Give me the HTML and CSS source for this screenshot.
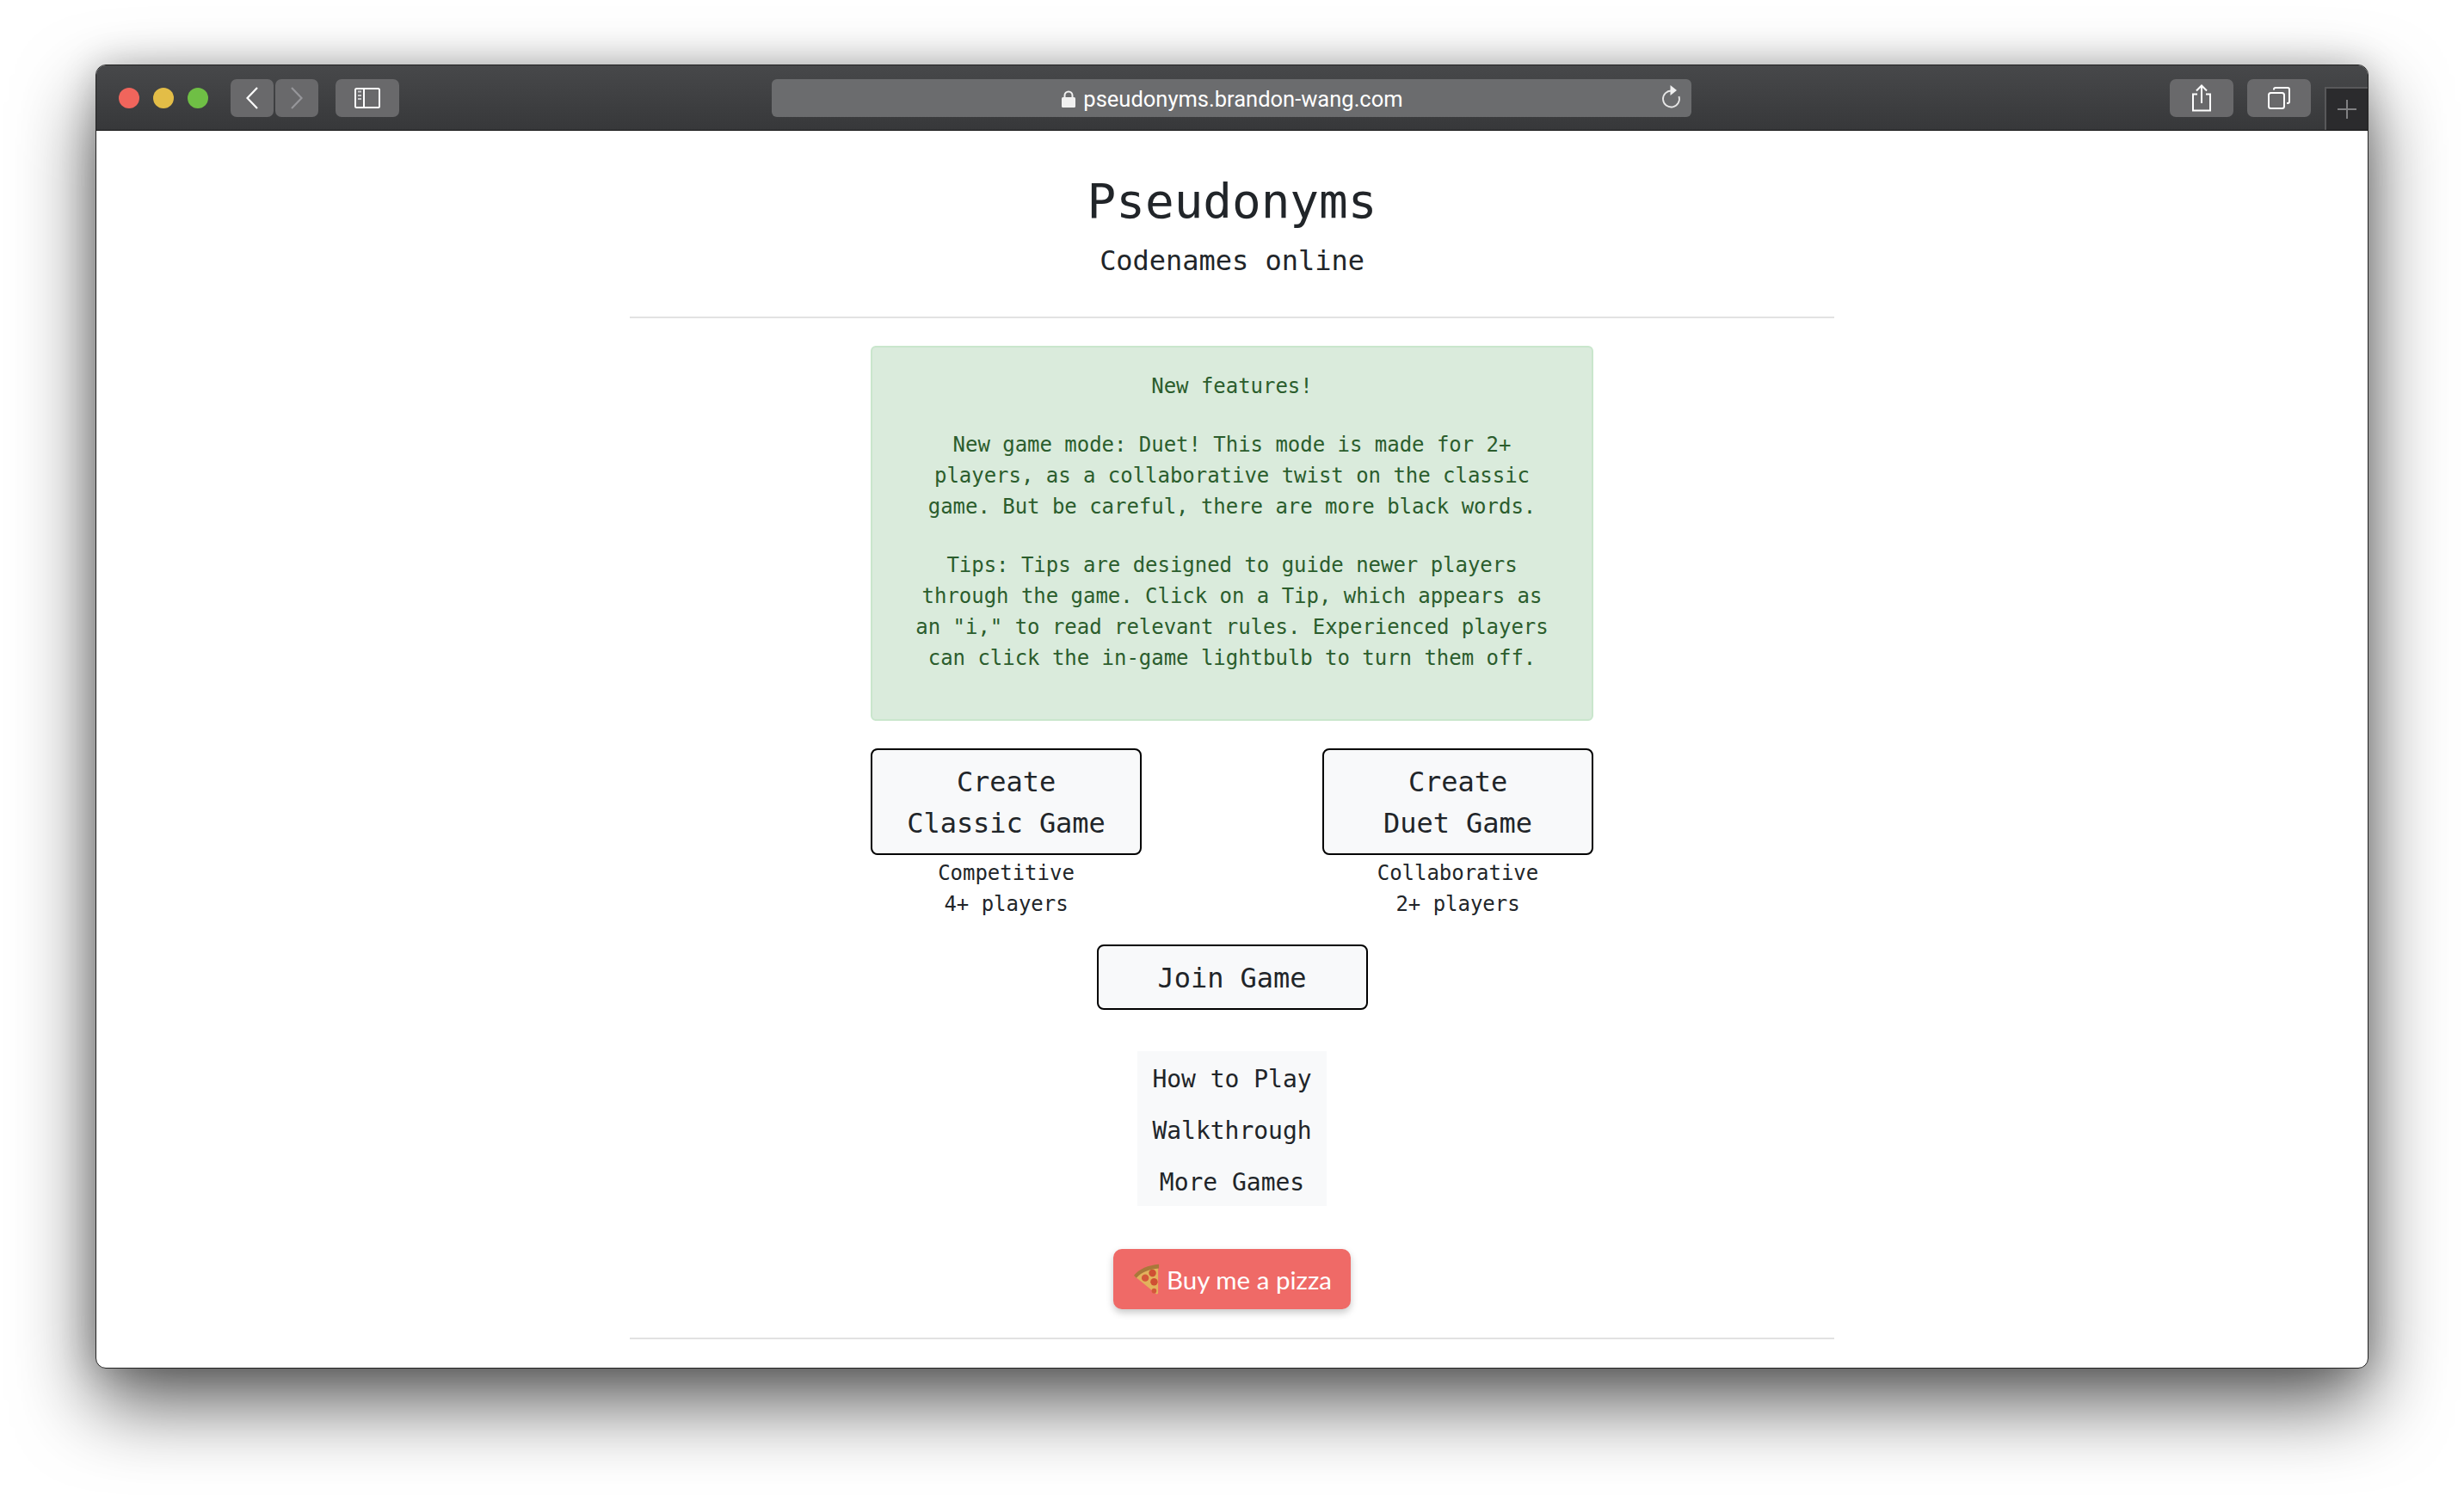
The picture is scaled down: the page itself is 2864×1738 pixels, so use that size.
FILE: index.html
```html
<!DOCTYPE html>
<html lang="en">
<head>
<meta charset="utf-8">
<title>Pseudonyms</title>
<link rel="stylesheet" href="styles.css">
</head>
<body>
<div class="window">
  <div class="toolbar">
    <div class="dots"><span class="dot red"></span><span class="dot yellow"></span><span class="dot green"></span></div>
    <div class="nav">
      <span class="tbtn nav-btn"><svg width="14" height="26" viewBox="0 0 14 26"><path d="M13 1 1.500 13 13 25" fill="none" stroke="#fff" stroke-width="2.200"/></svg></span>
      <span class="tbtn nav-btn"><svg width="14" height="26" viewBox="0 0 14 26"><path d="M1 1 12.500 13 1 25" fill="none" stroke="#96969a" stroke-width="2.200"/></svg></span>
    </div>
    <span class="tbtn sidebar-btn"><svg width="30" height="24" viewBox="0 0 30 24"><rect x="1" y="1" width="28" height="22" rx="1.500" fill="none" stroke="#fff" stroke-width="2"/><path d="M11 1v22" stroke="#fff" stroke-width="2"/><path d="M4 4.500h4M4 9h4M4 13h4" stroke="#c8c8ca" stroke-width="2"/></svg></span>
    <div class="urlbar">
      <div class="url">
        <svg width="16" height="20" viewBox="0 0 16 20"><path d="M3.500 9V6a4.500 4.500 0 0 1 9 0v3" fill="none" stroke="#f0f0f0" stroke-width="2"/><rect y="8" width="16" height="12" rx="1.500" fill="#f0f0f0"/></svg>
        <span>pseudonyms.brandon-wang.com</span>
      </div>
      <svg class="reload" width="24" height="28" viewBox="0 0 24 28"><path d="M13 6.500A9.500 9.500 0 1 0 21.500 13" fill="none" stroke="#e6e6e6" stroke-width="1.800"/><path d="M11.500 0 19 6 11.500 12z" fill="#f0f0f0"/></svg>
    </div>
    <span class="tbtn share-btn"><svg width="24" height="32" viewBox="0 0 24 32"><path d="M7 11.500H2v19h20v-19h-5" fill="none" stroke="#fff" stroke-width="2"/><path d="M12 22V2M6 7.500 12 1.500l6 6" fill="none" stroke="#fff" stroke-width="2"/></svg></span>
    <span class="tbtn tabs-btn"><svg width="26" height="26" viewBox="0 0 26 26"><rect x="1" y="7" width="18" height="18" rx="2.500" fill="none" stroke="#fff" stroke-width="2"/><path d="M7 3.500V3a2 2 0 0 1 2-2h14a2 2 0 0 1 2 2v14a2 2 0 0 1-2 2h-1" fill="none" stroke="#fff" stroke-width="2"/></svg></span>
    <span class="newtab"><svg width="22" height="22" viewBox="0 0 22 22"><path d="M11 0v22M0 11h22" stroke="#808082" stroke-width="2"/></svg></span>
  </div>
  <main class="page">
    <header class="head">
      <h1 class="title">Pseudonyms</h1>
      <p class="subtitle">Codenames online</p>
    </header>
    <div class="alert">
      <p>New features!</p>
      <p>New game mode: Duet! This mode is made for 2+ players, as a collaborative twist on the classic game. But be careful, there are more black words.</p>
      <p>Tips: Tips are designed to guide newer players through the game. Click on a Tip, which appears as an "i," to read relevant rules. Experienced players can click the in-game lightbulb to turn them off.</p>
    </div>
    <div class="create-row">
      <div class="create">
        <button class="btn">Create<br>Classic Game</button>
        <p class="note">Competitive<br>4+ players</p>
      </div>
      <div class="create">
        <button class="btn">Create<br>Duet Game</button>
        <p class="note">Collaborative<br>2+ players</p>
      </div>
    </div>
    <button class="btn join">Join Game</button>
    <nav class="links">
      <a>How to Play</a>
      <a>Walkthrough</a>
      <a>More Games</a>
    </nav>
    <a class="pizza">
      <svg class="slice" width="30" height="37" viewBox="0 0 32 38"><path d="M30 1C18 2 7 7 1 15l27 22c1.500 0 2-.5 2-2z" fill="#e2b25c"/><path d="M31 0C18 1 6 6 0 14l3 3C9 10 19 6 31 5z" fill="#a9783a"/><circle cx="23" cy="11" r="4.500" fill="#cf4f33"/><circle cx="14" cy="17" r="4.500" fill="#d4583a"/><circle cx="25" cy="22" r="4.500" fill="#cf4f33"/><circle cx="25" cy="33" r="3" fill="#d4583a"/></svg>
      <span>Buy me a pizza</span>
    </a>
    <hr class="rule">
  </main>
</div>
</body>
</html>
```
FILE: styles.css
```css
html, body { margin: 0; height: 100%; }
body {
  background: #fff;
  padding: 75px 111px 0;
  box-sizing: border-box;
  height: 1738px;
  overflow: hidden;
  font-family: "DejaVu Sans Mono", monospace;
  letter-spacing: -.002em;
}
.window {
  width: 2642px;
  height: 1516px;
  box-sizing: border-box;
  border: 1px solid #222;
  border-radius: 12px;
  background: #fff;
  overflow: hidden;
  box-shadow: 0 40px 90px rgba(0,0,0,.65), 0 0 40px rgba(0,0,0,.2);
}
.toolbar {
  height: 76px;
  box-sizing: border-box;
  border-bottom: 1px solid #111;
  background: linear-gradient(#47484a, #37383a);
  display: flex;
  align-items: flex-start;
  padding-left: 26px;
  letter-spacing: 0;
}
.dots { display: flex; gap: 16px; margin-top: 26px; }
.dot { width: 24px; height: 24px; border-radius: 50%; }
.red { background: #f0655c; }
.yellow { background: #e3bd47; }
.green { background: #6fbf45; }
.tbtn {
  height: 44px;
  margin-top: 16px;
  border-radius: 7px;
  background: #69696b;
  display: flex;
  align-items: center;
  justify-content: center;
}
.nav { display: flex; gap: 2px; margin-left: 26px; }
.nav-btn { width: 50px; }
.sidebar-btn { width: 74px; margin-left: 20px; }
.urlbar {
  width: 1069px;
  height: 44px;
  margin: 16px 0 0 433px;
  border-radius: 6px;
  background: #6b6c6e;
  display: flex;
  align-items: center;
  position: relative;
}
.url {
  flex: 1;
  display: flex;
  justify-content: center;
  align-items: center;
  gap: 9px;
  color: #fff;
  font: 25.500px/44px Roboto, sans-serif;
  padding-top: 2px;
  padding-left: 2px;
}
.reload { position: absolute; right: 12px; top: 7px; }
.share-btn { width: 74px; margin-left: 556px; }
.tabs-btn { width: 74px; margin-left: 16px; }
.newtab {
  width: 50px;
  height: 50px;
  margin: 25px 0 0 16px;
  box-sizing: border-box;
  background: #2b2b2d;
  border: solid #58585a;
  border-width: 2px 0 0 2px;
  display: flex;
  align-items: center;
  justify-content: center;
}
.page {
  display: flex;
  flex-direction: column;
  align-items: center;
  color: #212529;
}
.head {
  width: 1400px;
  padding-top: 48px;
  padding-bottom: 41px;
  border-bottom: 2px solid #e2e2e2;
  text-align: center;
}
.title { margin: 0; font-size: 56px; font-weight: 400; line-height: 67px; }
.subtitle { margin: 12px 0 0; font-size: 32px; line-height: 48px; }
.alert {
  width: 840px;
  box-sizing: border-box;
  margin-top: 32px;
  padding: 27px 40px 21px;
  border: 2px solid #c9e6cc;
  border-radius: 6px;
  background: #daebdc;
  color: #2b5d2d;
  font-size: 24px;
  line-height: 36px;
  text-align: center;
}
.alert p { margin: 0 0 32px; }
.create-row { width: 840px; display: flex; justify-content: space-between; margin-top: 32px; }
.create { width: 315px; text-align: center; }
.btn {
  display: block;
  width: 315px;
  box-sizing: border-box;
  padding: 13px 12px 11px;
  border: 2px solid #000;
  border-radius: 8px;
  background: #f8f9fa;
  color: #212529;
  font: 32px/48px "DejaVu Sans Mono", monospace;
  letter-spacing: -.002em;
}
.note { margin: 3px 0 0; font-size: 24px; line-height: 36px; }
.join { margin-top: 29px; }
.links {
  margin-top: 48px;
  width: 220px;
  background: #f8f9fa;
  display: flex;
  flex-direction: column;
  text-align: center;
  font-size: 28px;
  line-height: 60px;
}
.links a { position: relative; top: 3px; }
.pizza {
  margin-top: 50px;
  width: 276px;
  height: 70px;
  box-sizing: border-box;
  padding-left: 2px;
  border-radius: 10px;
  background: #ef6a67;
  box-shadow: 0 4px 8px rgba(0,0,0,.22);
  color: #fff;
  font: 29.500px Lato, sans-serif;
  letter-spacing: 0;
  display: flex;
  align-items: center;
  justify-content: center;
  gap: 8px;
}
.rule { width: 1400px; height: 2px; margin: 33px 0 0; border: 0; background: #e2e2e2; }
```
